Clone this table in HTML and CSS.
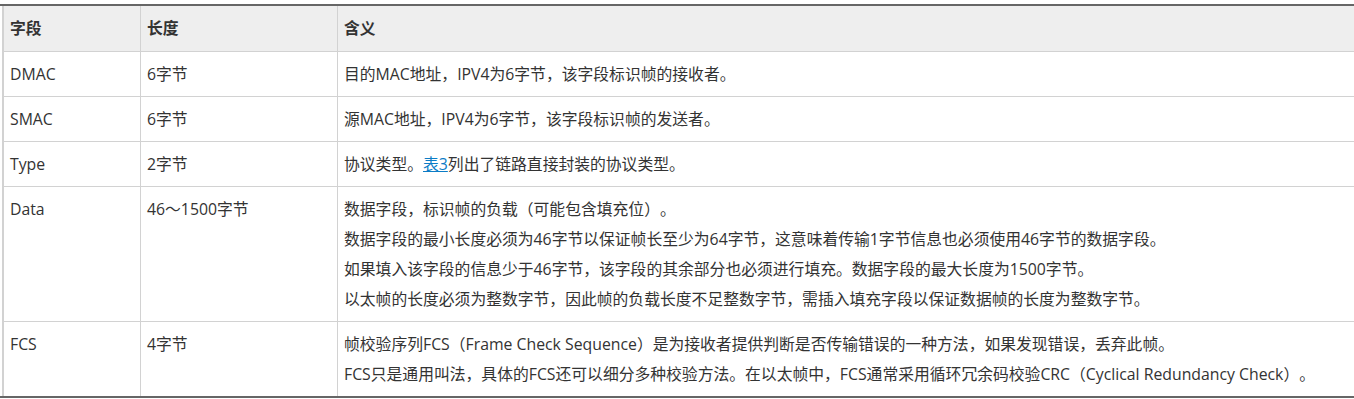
FILE: index.html
```html
<!DOCTYPE html>
<html lang="zh-CN">
<head>
<meta charset="utf-8">
<title>以太帧字段</title>
<link rel="stylesheet" href="styles.css">
</head>
<body>
<div class="table-wrap">
  <table class="fields">
    <colgroup>
      <col class="c1">
      <col class="c2">
      <col class="c3">
    </colgroup>
    <thead>
      <tr><th>字段</th><th>长度</th><th>含义</th></tr>
    </thead>
    <tbody>
      <tr><td>DMAC</td><td>6字节</td><td><p>目的MAC地址，IPV4为6字节，该字段标识帧的接收者。</p></td></tr>
      <tr><td>SMAC</td><td>6字节</td><td><p>源MAC地址，IPV4为6字节，该字段标识帧的发送者。</p></td></tr>
      <tr><td>Type</td><td>2字节</td><td><p>协议类型。<a href="#" class="ref">表3</a>列出了链路直接封装的协议类型。</p></td></tr>
      <tr><td>Data</td><td>46～1500字节</td><td>
        <p>数据字段，标识帧的负载（可能包含填充位）。</p>
        <p>数据字段的最小长度必须为46字节以保证帧长至少为64字节，这意味着传输1字节信息也必须使用46字节的数据字段。</p>
        <p>如果填入该字段的信息少于46字节，该字段的其余部分也必须进行填充。数据字段的最大长度为1500字节。</p>
        <p>以太帧的长度必须为整数字节，因此帧的负载长度不足整数字节，需插入填充字段以保证数据帧的长度为整数字节。</p>
      </td></tr>
      <tr class="last"><td>FCS</td><td>4字节</td><td>
        <p>帧校验序列FCS（Frame Check Sequence）是为接收者提供判断是否传输错误的一种方法，如果发现错误，丢弃此帧。</p>
        <p>FCS只是通用叫法，具体的FCS还可以细分多种校验方法。在以太帧中，FCS通常采用循环冗余码校验CRC（Cyclical Redundancy Check）。</p>
      </td></tr>
    </tbody>
  </table>
</div>
</body>
</html>
```
FILE: styles.css
```css
html, body {
  margin: 0;
  padding: 0;
  background: #fff;
}
body {
  font-family: "Open Sans", "Noto Sans CJK SC", sans-serif;
  font-size: 15.8px;
  color: #333;
  overflow: hidden;
  text-spacing-trim: space-all;
}
.table-wrap {
  margin-top: 4px;
  border-top: 2px solid #666;
  border-bottom: 2px solid #666;
  padding-left: 2px;
  overflow: hidden;
}
.fields {
  border-collapse: separate;
  border-spacing: 0;
  width: 1354px;
  table-layout: fixed;
}
.c1 { width: 139px; }
.c2 { width: 197px; }
.fields th,
.fields td {
  text-align: left;
  vertical-align: top;
  padding: 11px 6px;
  line-height: 22px;
  border-right: 1px solid #d2d2d2;
  border-bottom: 1px solid #d2d2d2;
}
.fields th:first-child,
.fields td:first-child {
  border-left: 2px solid #d2d2d2;
}
.fields th {
  background: #eee;
  font-weight: bold;
  padding-bottom: 12px;
}
.fields tr.last td {
  border-bottom: none;
}
.fields p {
  margin: 0;
}
.fields p + p {
  margin-top: 8px;
}
.ref {
  color: #0b7cc6;
  text-decoration: underline;
}
```
